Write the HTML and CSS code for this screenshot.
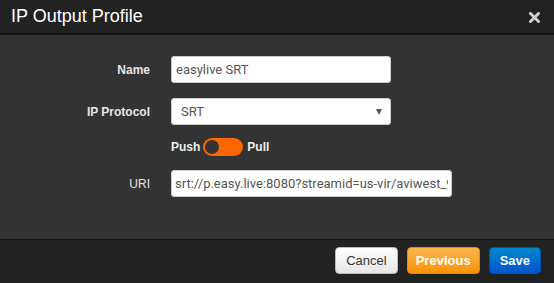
FILE: index.html
```html
<!DOCTYPE html>
<html lang="en">
<head>
    <meta charset="UTF-8">
    <title>IP Output Profile</title>
    <link rel="stylesheet" href="styles.css">
</head>
<body>
    <div class="modal">
        <!-- header -->
        <header class="modal-header">
            <h3>IP Output Profile</h3>
            <svg class="close" width="11" height="11" viewBox="0 0 11 11">
                <path d="M1.5 1.5 L9.5 9.5 M9.5 1.5 L1.5 9.5" stroke="#cfcfcf" stroke-width="3" stroke-linecap="round"/>
            </svg>
        </header>

        <!-- body -->
        <main class="modal-body">
            <div class="form-row">
                <label class="form-label">Name</label>
                <input class="text-input" type="text" value="easylive SRT">
            </div>
            <div class="form-row">
                <label class="form-label">IP Protocol</label>
                <div class="select-box">
                    <span>SRT</span>
                    <span class="caret"></span>
                </div>
            </div>
            <div class="form-row toggle-row">
                <span class="form-label"></span>
                <div class="toggle-group">
                    <span>Push</span>
                    <span class="toggle"><span class="knob"></span></span>
                    <span>Pull</span>
                </div>
            </div>
            <div class="form-row">
                <label class="form-label light">URI</label>
                <input class="text-input wide" type="text" value="srt://p.easy.live:8080?streamid=us-vir/aviwest_9">
            </div>
        </main>

        <!-- footer -->
        <footer class="modal-footer">
            <button class="btn btn-default">Cancel</button>
            <button class="btn btn-warning">Previous</button>
            <button class="btn btn-primary">Save</button>
        </footer>
    </div>
</body>
</html>
```

FILE: styles.css
```css
body, html {
    margin: 0;
    padding: 0;
    height: 100%;
    font-family: 'Liberation Sans', Arial, sans-serif;
    background-color: #222;
}

.modal {
    display: flex;
    flex-direction: column;
    height: 283px;
}

.modal-header {
    height: 33px;
    background-color: #222;
    border-bottom: 2px solid #111;
    display: flex;
    align-items: center;
    justify-content: space-between;
    padding: 0 14px 0 11px;
}

.modal-header h3 {
    margin: 0;
    font-size: 18px;
    font-weight: 400;
    color: #fff;
}

.close {
    margin-top: 1px;
}

.modal-body {
    height: 205px;
    background-color: #333;
    border-bottom: 1px solid #111;
    box-sizing: border-box;
    padding-top: 21px;
}

.form-row {
    display: flex;
    align-items: center;
    margin-bottom: 15px;
}

.form-label {
    width: 150px;
    text-align: right;
    margin-right: 21px;
    font-size: 12px;
    font-weight: 700;
    color: #e6e6e6;
}

.form-label.light {
    font-weight: 400;
}

.text-input, .select-box {
    width: 220px;
    height: 27px;
    box-sizing: border-box;
    border: 1px solid #ccc;
    border-radius: 3px;
    background-color: #fff;
    padding: 0 4px;
    font-family: Roboto, sans-serif;
    font-size: 13px;
    color: #555;
    margin: 0;
}

.text-input.wide {
    width: 281px;
    padding: 0 3px;
}

.select-box {
    display: flex;
    align-items: center;
    justify-content: space-between;
    padding: 0 8px 0 9px;
}

.caret {
    width: 0;
    height: 0;
    border-left: 3px solid transparent;
    border-right: 3px solid transparent;
    border-top: 6px solid #555;
}

.toggle-row {
    margin-top: -2px;
    margin-bottom: 14px;
}

.toggle-group {
    display: flex;
    align-items: center;
    gap: 3px;
    font-size: 12px;
    font-weight: 700;
    color: #eee;
}

.toggle {
    width: 40px;
    height: 18px;
    border-radius: 9px;
    background-color: #ff6600;
    display: flex;
    align-items: center;
    padding-left: 2px;
    box-sizing: border-box;
    margin-right: 1px;
}

.knob {
    width: 14px;
    height: 14px;
    border-radius: 50%;
    background-color: #333;
}

.modal-footer {
    flex: 1;
    background-color: #222;
    display: flex;
    justify-content: flex-end;
    align-items: flex-start;
    gap: 9px;
    padding: 7px 13px 0 0;
}

.btn {
    height: 27px;
    border-radius: 4px;
    font-family: 'Liberation Sans', Arial, sans-serif;
    font-size: 13px;
    padding: 0 10px;
    cursor: pointer;
}

.btn-default {
    background: linear-gradient(#fff, #e6e6e6);
    border: 1px solid #bbb;
    color: #333;
}

.btn-warning {
    background: linear-gradient(#fbb450, #f89406);
    border: 1px solid #e58a08;
    color: #fff;
    font-weight: 700;
    padding: 0 8px;
}

.btn-primary {
    background: linear-gradient(#0088cc, #0055cc);
    border: 1px solid #0350b4;
    color: #fff;
    font-weight: 700;
}
```
